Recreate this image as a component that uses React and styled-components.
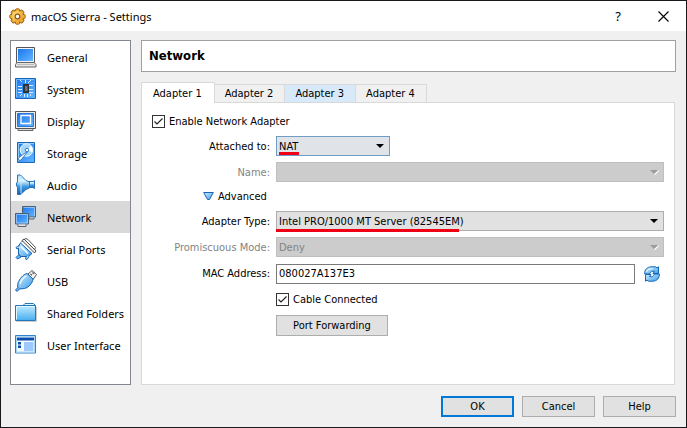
import { useState } from 'react'
import styled, { createGlobalStyle, css } from 'styled-components'


const uiFont = '"Noto Sans", "Open Sans", sans-serif'
const formFont = '"DejaVu Sans Condensed", "DejaVu Sans", sans-serif'

const GlobalStyle = createGlobalStyle`
  * {
    box-sizing: border-box;
  }

  body {
    margin: 0;
    background-color: #f0f0f0;
    color: #000;
    font-family: ${uiFont};
    font-size: 11px;
  }

  button, input, select {
    font: inherit;
    color: inherit;
  }

  svg {
    flex: none;
  }
`

const Window = styled.div`
  display: flex;
  flex-direction: column;
  min-height: 100vh;
  border: 1px solid #18181c;
`

/* Title bar */
const TitleBar = styled.header`
  display: flex;
  align-items: center;
  height: 30px;
  padding: 0 10px 0 8px;
  background-color: #fff;

  h1 {
    flex: 1;
    margin: 0 0 0 5px;
    font-size: 11px;
    font-weight: normal;
  }
`

const TitleButton = styled.button`
  display: flex;
  align-items: center;
  justify-content: center;
  width: 26px;
  height: 28px;
  margin-left: 19px;
  padding: 0;
  border: 0;
  background: none;
  font-size: 13px;
`

/* Left menu + page */
const Body = styled.div`
  display: flex;
  flex: 1;
  gap: 10px;
  padding: 9px 10px 11px 9px;
`

const Sidebar = styled.nav`
  flex: none;
  width: 121px;
  border: 1px solid #828790;
  background-color: #fff;
`

const SidebarItem = styled.a`
  display: flex;
  align-items: center;
  gap: 10px;
  height: 32px;
  padding-left: 4px;
  color: #000;
  text-decoration: none;
  white-space: nowrap;
  background-color: ${({ $active }) => ($active ? '#d9d9d9' : 'transparent')};
`

const Page = styled.main`
  display: flex;
  flex: 1;
  flex-direction: column;
  min-width: 0;
`

const PageTitle = styled.h2`
  height: 32px;
  margin: 0 0 10px;
  padding-left: 7px;
  border: 1px solid #a0a0a0;
  background-color: #fff;
  font-family: ${formFont};
  font-size: 13px;
  line-height: 30px;
`

const Tabs = styled.div`
  display: flex;
  align-items: flex-end;
  height: 20px;
`

const Tab = styled.button`
  height: 18px;
  padding: 0 11px 0 10px;
  border: 1px solid #d9d9d9;
  border-width: 1px 1px 0 0;
  background-color: ${({ $hover }) => ($hover ? '#d8eaf9' : '#f0f0f0')};
  font-family: ${formFont};
  font-size: 11px;

  ${({ $active }) =>
    $active &&
    css`
      z-index: 1;
      height: 21px;
      margin-bottom: -1px;
      padding: 0 12px 0 11px;
      border-left-width: 1px;
      background-color: #fff;
    `}
`

const Panel = styled.section`
  flex: 1;
  margin-right: 1px;
  padding: 9px 10px;
  border: 1px solid #d9d9d9;
  background-color: #fff;
  font-family: ${formFont};
  font-size: 11px;
`

/* Form */
const Form = styled.div`
  display: grid;
  grid-template-columns: 118px 1fr;
  grid-template-rows: 20px 20px 17px 20px 20px 21px 19px 21px;
  gap: 6px;
  margin-top: 5px;
`

const Label = styled.label`
  align-self: center;
  text-align: right;
  white-space: nowrap;
  color: ${({ $disabled }) => ($disabled ? '#838383' : '#000')};
`

const CheckLabel = styled.label`
  display: flex;
  align-items: center;
  gap: 4px;
  height: 19px;
`

const CheckWrap = styled.span`
  display: grid;

  > * {
    grid-area: 1 / 1;
  }

  svg {
    pointer-events: none;
  }
`

const CheckInput = styled.input`
  width: 13px;
  height: 13px;
  margin: 0;
  appearance: none;
  border: 1px solid #333;
  background-color: #fff;

  &:not(:checked) + svg {
    visibility: hidden;
  }
`

const SelectWrap = styled.div`
  position: relative;
  display: grid;
  align-items: center;
  width: ${({ $width }) => $width || 'auto'};

  > select,
  > svg {
    grid-area: 1 / 1;
  }

  > svg {
    justify-self: end;
    margin-right: 5px;
    pointer-events: none;
  }
`

const Select = styled.select`
  width: 100%;
  height: 20px;
  padding: 0 20px 0 2px;
  appearance: none;
  border: 1px solid ${({ $focused }) => ($focused ? '#6f9dc6' : '#adadad')};
  border-radius: 0;
  background-color: ${({ $focused }) => ($focused ? '#e0e3e8' : '#e1e1e1')};

  &:disabled {
    border-color: #bfbfbf;
    background-color: #ccc;
    color: #838383;
    opacity: 1;
  }
`

const Marker = styled.span`
  position: absolute;
  left: ${({ $left }) => $left}px;
  bottom: ${({ $bottom }) => $bottom}px;
  width: ${({ $width }) => $width}px;
  height: 3px;
  background-color: #f00014;
  pointer-events: none;
`

const Disclosure = styled.button`
  grid-column: 1 / -1;
  justify-self: start;
  display: flex;
  align-items: center;
  gap: 4px;
  margin-left: 51px;
  padding: 0;
  border: 0;
  background: none;
`

const MacRow = styled.div`
  display: flex;
  align-items: center;
  gap: 9px;
  padding-right: 4px;
`

const TextInput = styled.input`
  flex: 1;
  min-width: 0;
  height: 20px;
  padding: 0 2px;
  border: 1px solid #7a7a7a;
  background-color: #fff;
`

const IconButton = styled.button`
  display: flex;
  padding: 0;
  border: 0;
  background: none;
`

const Button = styled.button`
  width: ${({ $wide }) => ($wide ? 112 : 73)}px;
  height: 21px;
  padding: 0;
  border: ${({ $primary }) => ($primary ? '2px solid #0078d7' : '1px solid #adadad')};
  background-color: #e1e1e1;
  font-family: ${formFont};
  font-size: 11px;
`

const Footer = styled.footer`
  display: flex;
  justify-content: flex-end;
  gap: 8px;
  padding: 0 10px 10px;
`

/* Icons */
const Gradients = () => (
  <svg width="0" height="0" style={{ position: 'absolute' }} aria-hidden="true">
    <defs>
      <linearGradient id="screen" x1="0" y1="0" x2="1" y2="1">
        <stop offset="0" stopColor="#1c74ee" />
        <stop offset="1" stopColor="#62b8ff" />
      </linearGradient>
      <linearGradient id="light" x1="0" y1="0" x2="1" y2="1">
        <stop offset="0" stopColor="#d3f0ff" />
        <stop offset="1" stopColor="#3c9ae8" />
      </linearGradient>
      <linearGradient id="folder" x1="0" y1="0" x2="0" y2="1">
        <stop offset="0" stopColor="#c0edff" />
        <stop offset="1" stopColor="#48adf0" />
      </linearGradient>
      <linearGradient id="cone" x1="0" y1="0" x2="0" y2="1">
        <stop offset="0" stopColor="#a9dcff" />
        <stop offset="0.3" stopColor="#e0f6ff" />
        <stop offset="0.6" stopColor="#3f98e0" />
        <stop offset="1" stopColor="#0d59b0" />
      </linearGradient>
      <linearGradient id="gold" x1="0" y1="0" x2="1" y2="1">
        <stop offset="0" stopColor="#ffe27c" />
        <stop offset="1" stopColor="#e9941c" />
      </linearGradient>
    </defs>
  </svg>
)

const Icon = ({ size = 22, children }) => (
  <svg width={size} height={size} viewBox={`0 0 ${size} ${size}`} fill="none" aria-hidden="true">
    {children}
  </svg>
)

const GeneralIcon = () => (
  <Icon>
    <path d="M1.5 1.5h18v15h-18z" fill="#f4f4f4" stroke="#555" />
    <path d="M3 3h15v12H3z" fill="url(#screen)" />
    <path d="M2 16.5h17l2 2v2.500H.5v-2.500z" fill="#e4e4e4" stroke="#666" />
    <path d="M2 18.500h17" stroke="#bbb" />
  </Icon>
)

const SystemIcon = () => (
  <Icon>
    <path d="M.5.5h20v20H.5z" fill="url(#screen)" stroke="#1a62b8" />
    <path d="M1.500 19V1.500H19" stroke="#78c0ff" />
    <path
      d="M3 8.500h4M3 11.500h4M3 14.500h4M14 7.500h4M14 11.500h4M14 14.500h4M10.500 5V2M13 5l3-3M7 4 5 2M9.500 16v3M12.500 16v3M15.500 16v2M7 16l-2 2"
      stroke="#d9efff"
    />
    <path d="M8 6h6v9H8z" fill="#303336" />
    <path d="M10 8h2.500v5H10z" fill="#707478" />
  </Icon>
)

const DisplayIcon = () => (
  <Icon>
    <path d="M.5 1.500h20v17H.5z" fill="#eee" stroke="#555" />
    <path d="M2.500 3.500h16v13h-16z" fill="url(#screen)" stroke="#2b78d4" />
    <path d="M6 5.500h9.500v8H6z" stroke="#fff" strokeWidth="1.300" />
    <path d="M3 19v1.500h15V19" fill="#ddd" stroke="#666" />
  </Icon>
)

const StorageIcon = () => (
  <Icon>
    <path d="M2.500.5h17v20h-17z" fill="url(#screen)" stroke="#1c66ba" />
    <path d="M3.500 19V1.500H19" stroke="#8accff" />
    <circle cx="11.500" cy="8" r="6.300" fill="#a4d8fa" stroke="#e9f8ff" />
    <path d="M11.500 8 16 4a6 6 0 0 1 1 6z" fill="#fff" />
    <circle cx="12" cy="8" r="1.800" fill="#fff" stroke="#3178c0" />
    <path d="M12 10.500 6 18a1.600 1.600 0 0 1-2-2.500L10 11z" fill="#fff" stroke="#2264a8" strokeWidth=".8" />
  </Icon>
)

const AudioIcon = () => (
  <Icon>
    <path d="M13 7.500h5l1.500-1v8l-1.500-1h-5z" fill="url(#cone)" stroke="#2a75bc" />
    <path d="M2.500 1h3l5.500 5.500 3.500 1.500v6L11 15.500 5.500 20.500h-3V13L1.500 12V9l1-1z" fill="url(#cone)" stroke="#2a75bc" />
    <path d="M6 2v17.500" stroke="#c3e9ff" />
  </Icon>
)

const NetworkIcon = () => (
  <Icon>
    <path d="M7.500.5h13v10.500h-13z" fill="url(#screen)" stroke="#4b6174" />
    <path d="M8.500 1.500h11V10" stroke="#cbe2f6" strokeWidth=".6" />
    <path d="M14 11.500v1.500h5v-1.500" fill="#cfd5da" stroke="#56636e" />
    <path d="M.5 7.500h13v10.500H.5z" fill="url(#screen)" stroke="#4b6174" />
    <path d="M1.500 17V8.500h11V17z" stroke="#cbe2f6" strokeWidth=".6" />
    <path d="M3 18.500v2h8v-2" fill="#e1e5e8" stroke="#56636e" />
  </Icon>
)

const SerialIcon = () => (
  <Icon>
    <path d="M6 4.500 9 1.500l2-1 2 1 7.500 8-1 2.500" fill="#fff" stroke="#555" />
    <path d="m7 2.500 2-1.500 12 12-1.500 2z" fill="#eee" stroke="#4a4a4a" />
    <path d="M5.500 5 3.500 8v8l2 2.500h8l3.500-3z" fill="url(#light)" stroke="#1761ac" />
    <path d="M6 8.500 13 15.500" stroke="#e4f8ff" strokeWidth="1.800" />
    <path d="M4.500 7.500 1 9.500l1 1.500 2-1M11.500 18l-1 3 1.500.5 2-3" fill="#d3f0ff" stroke="#1761ac" />
    <path d="m4 16.500-3 3 1.500 1.500 3.500-2z" fill="#66b8f4" stroke="#1761ac" />
  </Icon>
)

const UsbIcon = () => (
  <Icon>
    <path d="m13 4 4-3.500 4.500 4-3.500 5z" fill="#f4f4f4" stroke="#555" />
    <path d="m15.500 4 1.500 1.300M17.500 2.500l1.500 1.300" stroke="#555" strokeWidth="1.300" />
    <path d="m12 3.500 6 5.500c-.5 4-4 8.500-8.500 9.500l-5 .5L2.500 17l.5-4C4.500 9 8 4.500 12 3.500z" fill="url(#light)" stroke="#1761ac" />
    <path d="M11.500 6C8.500 7.500 6 10.500 5 14" stroke="#e5f8ff" strokeWidth="1.500" />
    <path d="m3 17.500-2.500 2.500 1.500 1.500L4.500 19" fill="#66b8f4" stroke="#1761ac" />
  </Icon>
)

const FolderIcon = () => (
  <Icon>
    <path d="M7.500 4 10 1.500h8.500l2 2V6" fill="#dcf6ff" stroke="#2477b9" />
    <path d="M.5 3.500h20v15H.5z" fill="url(#folder)" stroke="#2477b9" />
    <path d="M1.500 17.500v-13h18" stroke="#dff7ff" />
    <path d="M1 19.500h20.500V5" stroke="#999" strokeWidth=".5" />
  </Icon>
)

const InterfaceIcon = () => (
  <Icon>
    <path d="M.5 1.500h20v17.500H.5z" fill="#f6faff" stroke="#3182c6" />
    <path d="M1.500 18V2.500H19.500V18z" stroke="#a8d7f7" />
    <path d="M2 3.500h17v3H2z" fill="#0b4fac" />
    <path d="M9 8h9.500v9H9z" fill="#9ec9ff" />
    <path d="M3 8h3v2.500H3zM3 11.500h3V14H3z" fill="#0b4fac" />
  </Icon>
)

const teeth = [0, 45, 90, 135, 180, 225, 270, 315]

const GearIcon = () => (
  <Icon size={17}>
    {teeth.map((angle) => (
      <rect key={angle} x="6.500" y=".8" width="4" height="5" rx="1" fill="#f2ae34" stroke="#a0661a" transform={`rotate(${angle} 8.500 8.500)`} />
    ))}
    <circle cx="8.500" cy="8.500" r="5.700" fill="url(#gold)" />
    <circle cx="8.500" cy="8.500" r="2.300" fill="#fff" stroke="#8a5c1e" strokeWidth="1.200" />
  </Icon>
)

const CloseIcon = () => (
  <Icon size={11}>
    <path d="m.5.5 10 10M10.500.5l-10 10" stroke="#000" strokeWidth="1.100" />
  </Icon>
)

const RefreshIcon = () => (
  <Icon size={16}>
    <path d="M.6 8C.4 4 3 1 7 .8h4.500l1.500 1L14.500.8V7.500H9L10.500 5.500C8 4.500 6.500 6 5.500 8z" fill="url(#light)" stroke="#1368b8" />
    <path d="M15.400 8c.2 4-2.400 7-6.400 7.200H4.500l-1.500-1-1.500 1V8.500H7L5.500 10.500c2.500 1 4-.5 5-2.500z" fill="url(#light)" stroke="#1368b8" />
    <path d="M2.500 6C3.500 3.500 5.500 2.500 9 2.800" stroke="#e4f8ff" strokeWidth="1.200" />
  </Icon>
)

const TriangleIcon = () => (
  <Icon size={11}>
    <path d="M.7 1.500h9.600L6.500 8.500h-2z" fill="url(#light)" stroke="#1764b4" />
  </Icon>
)

const ArrowIcon = ({ disabled }) => (
  <svg width="9" height="6" viewBox="0 0 9 6" aria-hidden="true">
    {disabled && <path d="M9 1v1L5 6 4 5z" fill="#fff" />}
    <path d="M0 1h8L4 5z" fill={disabled ? '#9b9b9b' : '#000'} />
  </svg>
)

const menu = [
  { name: 'General', icon: GeneralIcon },
  { name: 'System', icon: SystemIcon },
  { name: 'Display', icon: DisplayIcon },
  { name: 'Storage', icon: StorageIcon },
  { name: 'Audio', icon: AudioIcon },
  { name: 'Network', icon: NetworkIcon },
  { name: 'Serial Ports', icon: SerialIcon },
  { name: 'USB', icon: UsbIcon },
  { name: 'Shared Folders', icon: FolderIcon },
  { name: 'User Interface', icon: InterfaceIcon },
]

const tabs = ['Adapter 1', 'Adapter 2', 'Adapter 3', 'Adapter 4']

function Checkbox({ children }) {
  return (
    <CheckLabel>
      <CheckWrap>
        <CheckInput type="checkbox" defaultChecked />
        <svg width="13" height="13" viewBox="0 0 13 13" fill="none">
          <path d="M2.500 6.500 5 9l5.500-5.500" stroke="#222" strokeWidth="1.200" />
        </svg>
      </CheckWrap>
      {children}
    </CheckLabel>
  )
}

function ComboBox({ id, options, disabled, focused, width, children }) {
  return (
    <SelectWrap $width={width}>
      <Select id={id} disabled={disabled} $focused={focused}>
        {options.map((option) => (
          <option key={option}>{option}</option>
        ))}
      </Select>
      <ArrowIcon disabled={disabled} />
      {children}
    </SelectWrap>
  )
}

export default function App() {
  const [tab, setTab] = useState('Adapter 1')

  return (
    <Window>
      <GlobalStyle />
      <Gradients />
      <TitleBar>
        <GearIcon />
        <h1>macOS Sierra - Settings</h1>
        <TitleButton type="button">?</TitleButton>
        <TitleButton type="button" aria-label="Close">
          <CloseIcon />
        </TitleButton>
      </TitleBar>

      <Body>
        <Sidebar>
          {menu.map(({ name, icon: ItemIcon }) => (
            <SidebarItem key={name} href="#" $active={name === 'Network'}>
              <ItemIcon />
              {name}
            </SidebarItem>
          ))}
        </Sidebar>

        <Page>
          <PageTitle>Network</PageTitle>
          <Tabs role="tablist">
            {tabs.map((name) => (
              <Tab
                key={name}
                type="button"
                role="tab"
                aria-selected={name === tab}
                $active={name === tab}
                $hover={name === 'Adapter 3'}
                onClick={() => setTab(name)}
              >
                {name}
              </Tab>
            ))}
          </Tabs>

          <Panel>
            <Checkbox>Enable Network Adapter</Checkbox>
            <Form>
              <Label htmlFor="attached">Attached to:</Label>
              <ComboBox id="attached" options={['NAT']} width="114px" focused>
                <Marker $left={3} $bottom={1} $width={20} />
              </ComboBox>

              <Label htmlFor="name" $disabled>Name:</Label>
              <ComboBox id="name" options={['']} disabled />

              <Disclosure type="button">
                <TriangleIcon />
                Advanced
              </Disclosure>

              <Label htmlFor="type">Adapter Type:</Label>
              <ComboBox id="type" options={['Intel PRO/1000 MT Server (82545EM)']}>
                <Marker $left={0} $bottom={-1} $width={183} />
              </ComboBox>

              <Label htmlFor="mode" $disabled>Promiscuous Mode:</Label>
              <ComboBox id="mode" options={['Deny']} disabled />

              <Label htmlFor="mac">MAC Address:</Label>
              <MacRow>
                <TextInput id="mac" type="text" defaultValue="080027A137E3" />
                <IconButton type="button" aria-label="Generate new MAC address">
                  <RefreshIcon />
                </IconButton>
              </MacRow>

              <span />
              <Checkbox>Cable Connected</Checkbox>

              <span />
              <Button type="button" $wide>Port Forwarding</Button>
            </Form>
          </Panel>
        </Page>
      </Body>

      <Footer>
        <Button type="button" $primary>OK</Button>
        <Button type="button">Cancel</Button>
        <Button type="button">Help</Button>
      </Footer>
    </Window>
  )
}
